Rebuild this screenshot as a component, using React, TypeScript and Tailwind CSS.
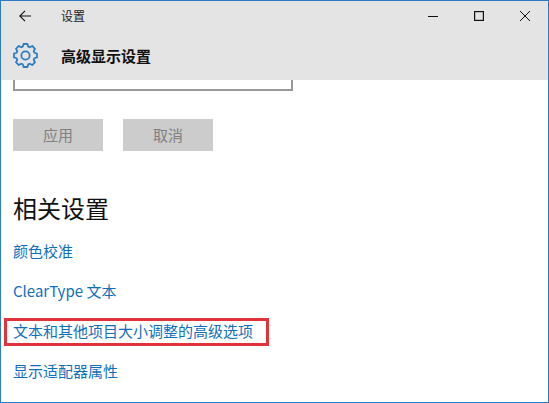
import React from "react";

const font = '"Noto Sans CJK SC", "Noto Sans", sans-serif';
const links = ["颜色校准", "ClearType 文本", "文本和其他项目大小调整的高级选项", "显示适配器属性"];

function gearPath() {
  const teeth = 8;
  const pts: string[] = [];
  const c = 12;
  for (let i = 0; i < teeth; i++) {
    const a = (i * Math.PI * 2) / teeth;
    const seq: [number, number][] = [
      [8.9, a - 0.3],
      [11.2, a - 0.17],
      [11.2, a + 0.17],
      [8.9, a + 0.3],
    ];
    for (const [r, t] of seq) {
      pts.push(`${(c + r * Math.sin(t)).toFixed(2)} ${(c - r * Math.cos(t)).toFixed(2)}`);
    }
  }
  return `M${pts.join("L")}Z`;
}

export default function App() {
  return (
    <div className="relative flex h-[403px] w-[549px] flex-col overflow-hidden border border-[#2b7cc4] bg-white" style={{ fontFamily: font }}>
      <header className="flex h-[79px] shrink-0 flex-col bg-[#e4e4e4]">
        <div className="flex h-[30px] items-center">
          <svg className="ml-[18px] h-[12px] w-[12px]" viewBox="0 0 12 12" fill="none" stroke="#111" strokeWidth="1.1">
            <path d="M.5 6h11.5M6 .8.8 6 6 11.2" />
          </svg>
          <span className="ml-[30px] text-[12px] leading-none text-[#222]">设置</span>
          <div className="ml-auto flex items-center">
            <svg className="h-[12px] w-[12px]" viewBox="0 0 12 12" fill="none" stroke="#111" strokeWidth="1"><path d="M1 6.5h10" /></svg>
            <svg className="ml-[34px] h-[12px] w-[12px]" viewBox="0 0 12 12" fill="none" stroke="#111" strokeWidth="1.2"><rect x="1.6" y="1.6" width="8.8" height="8.8" /></svg>
            <svg className="ml-[34px] mr-[17px] h-[12px] w-[12px]" viewBox="0 0 12 12" fill="none" stroke="#111" strokeWidth="1"><path d="m1 1 10 10M11 1 1 11" /></svg>
          </div>
        </div>
        <div className="flex h-[48px] items-center">
          <svg className="ml-[12px] h-[25px] w-[25px]" viewBox="0 0 24 24" fill="none" stroke="#2b7cc4" strokeWidth="1.7" strokeLinejoin="round">
            <path d={gearPath()} />
            <circle cx="12" cy="12" r="4" />
          </svg>
          <h1 className="ml-[23px] text-[15px] font-bold leading-none text-[#111]">高级显示设置</h1>
        </div>
      </header>

      <main className="flex flex-col pl-[12px]">
        <div className="h-[11px] w-[280px] border-x-2 border-b-2 border-[#999999]" />
        <div className="mt-[28px] flex gap-[20px]">
          <button className="h-[32px] w-[90px] bg-[#cccccc] text-[15px] text-[#808080]">应用</button>
          <button className="h-[32px] w-[90px] bg-[#cccccc] text-[15px] text-[#808080]">取消</button>
        </div>
        <h2 className="mt-[39px] text-[24px] font-normal leading-[36px] text-[#111]">相关设置</h2>
        <ul className="mt-[14px] flex flex-col gap-[18px]">
          {links.map((l) => (
            <li key={l} className="h-[22px] text-[15px] leading-[22px] text-[#0f6fbd]">{l}</li>
          ))}
        </ul>
      </main>

      <div className="absolute left-[3px] top-[317px] h-[28px] w-[265px] border-[3px] border-[#e2333a]" />
    </div>
  );
}
